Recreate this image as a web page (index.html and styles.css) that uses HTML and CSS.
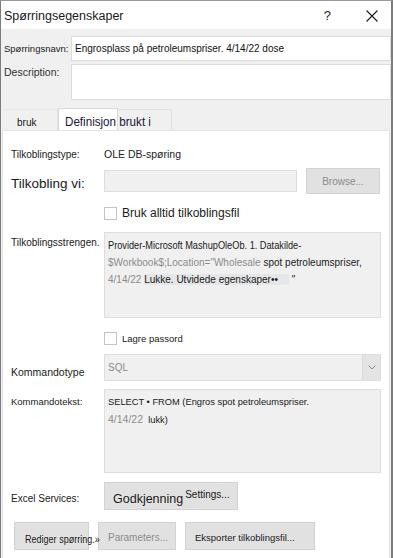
FILE: index.html
```html
<!DOCTYPE html>
<html>
<head>
<meta charset="utf-8">
<link rel="stylesheet" href="styles.css">
</head>
<body>
<div class="window">
  <div class="titlebar">
    <span class="title">Spørringsegenskaper</span>
    <span class="help">?</span>
    <svg class="close" width="12" height="12" viewBox="0 0 12 12"><path d="M0.5 0.5L11.5 11.5M11.5 0.5L0.5 11.5" stroke="#1a1a1a" stroke-width="1.1" fill="none"/></svg>
  </div>
  <div class="body">
    <div class="qrow">
      <span class="qlabel small">Spørringsnavn:</span>
      <div class="qinput">Engrosplass på petroleumspriser. 4/14/22 dose</div>
    </div>
    <div class="qrow desc">
      <span class="qlabel">Description:</span>
      <div class="qarea"></div>
    </div>
    <div class="tabs">
      <div class="tab t1">bruk</div>
      <div class="tab t2"><span class="t2label">Definisjon brukt i</span></div>
      <div class="tab t3"></div>
    </div>
    <div class="panel">
      <div class="row r1">
        <span class="label small">Tilkoblingstype:</span>
        <span class="value">OLE DB-spøring</span>
      </div>
      <div class="row r2">
        <span class="label big">Tilkobling vi:</span>
        <div class="field conn"></div>
        <div class="btn browse">Browse...</div>
      </div>
      <div class="row r3">
        <span class="label"></span>
        <span class="check"></span>
        <span class="checktext big">Bruk alltid tilkoblingsfil</span>
      </div>
      <div class="row r4">
        <span class="label mid">Tilkoblingsstrengen.</span>
        <div class="field area connstr">
          <div class="line"><span class="narrow">Provider-Microsoft MashupOleOb. 1. Datakilde-</span></div>
          <div class="line"><span class="gray">$Workbook$;Location="Wholesale</span> spot petroleumspriser,</div>
          <div class="line"><span class="gray">4/14/22</span> <span class="hl">Lukke. Utvidede egenskaper••&nbsp;&nbsp;&nbsp;&nbsp;</span> "</div>
        </div>
      </div>
      <div class="row r5">
        <span class="label"></span>
        <span class="check"></span>
        <span class="checktext small">Lagre passord</span>
      </div>
      <div class="row r6">
        <span class="label cmd">Kommandotype</span>
        <div class="field select">
          <span class="seltext">SQL</span>
          <span class="arrow"><svg width="8" height="5" viewBox="0 0 8 5"><path d="M0.5 0.5L4 4L7.5 0.5" stroke="#8a8a8a" stroke-width="1" fill="none"/></svg></span>
        </div>
      </div>
      <div class="row r7">
        <span class="label small">Kommandotekst:</span>
        <div class="field area cmdtext">
          <div class="line">SELECT • FROM (Engros spot petroleumspriser.</div>
          <div class="line"><span class="gray big3">4/14/22</span>&nbsp; lukk)</div>
        </div>
      </div>
      <div class="row r8">
        <span class="label mid">Excel Services:</span>
        <div class="btn auth"><span class="big2">Godkjenning</span><span class="sett">Settings...</span></div>
      </div>
      <div class="row r9">
        <div class="btn b1"><span class="b1text">Rediger spørring.»</span></div>
        <div class="btn b2">Parameters...</div>
        <div class="btn b3">Eksporter tilkoblingsfil...</div>
      </div>
    </div>
  </div>
</div>
</body>
</html>
```

FILE: styles.css
```css
* { box-sizing: border-box; }
html, body { margin: 0; padding: 0; }
body {
  font-family: "Liberation Sans", Arial, sans-serif;
  color: #1a1a1a;
  background: #fff;
}
.window {
  width: 393px;
  height: 558px;
  border-left: 1px solid #7d7d7d;
  border-top: 1px solid #9a9a9a;
  border-right: 2px solid #7d7d7d;
  overflow: hidden;
  display: flex;
  flex-direction: column;
}
.titlebar {
  height: 28px;
  background: #fff;
  display: flex;
  align-items: center;
  flex-shrink: 0;
}
.title {
  font-size: 12.5px;
  margin-left: 3px;
  margin-top: 2px;
  flex: 1;
}
.help {
  font-size: 13px;
  margin-right: 35px;
  margin-top: 1px;
}
.close { margin-right: 13px; margin-top: 2px; }
.body {
  flex: 1;
  background: #f0f0f0;
  display: flex;
  flex-direction: column;
  padding-top: 7px;
}
.qrow {
  display: flex;
  align-items: center;
  height: 25px;
}
.qrow.desc {
  margin-top: 3px;
  height: 36px;
  align-items: flex-start;
}
.qlabel {
  width: 70px;
  padding-left: 3px;
  font-size: 10.5px;
  color: #333;
}
.qlabel.small { font-size: 9.5px; padding-left: 3px; color: #1a1a1a; }
.desc .qlabel { margin-top: 2px; }
.qinput {
  flex: 1;
  height: 25px;
  background: #fff;
  border: 1px solid #dcdcdc;
  font-size: 10px;
  padding-left: 3px;
  display: flex;
  align-items: center;
  color: #111;
}
.qarea {
  flex: 1;
  height: 36px;
  background: #fff;
  border: 1px solid #dcdcdc;
}
.tabs {
  margin-top: 8px;
  display: flex;
  height: 22px;
  padding-left: 2px;
  align-items: flex-end;
}
.tab {
  height: 21px;
  font-size: 10px;
  display: flex;
  align-items: center;
}
.t1 {
  width: 55px;
  padding-left: 14px;
  padding-top: 4px;
  border-top: 1px solid #e8e8e8;
  border-right: 1px solid #e2e2e2;
}
.t2 {
  width: 60px;
  height: 22px;
  background: #fff;
  border: 1px solid #d8d8d8;
  border-bottom: none;
  position: relative;
  z-index: 1;
}
.t2label {
  position: absolute;
  left: 6px;
  top: 6px;
  font-size: 12.5px;
  white-space: nowrap;
  color: #1a1240;
  transform: scaleX(0.93);
  transform-origin: left center;
}
.t3 {
  width: 54px;
  border-top: 1px solid #e0e0e0;
  border-right: 1px solid #e0e0e0;
}
.panel {
  flex: 1;
  background: #fff;
  margin-left: 1px;
  margin-right: 1px;
  border-left: 1px solid #e4e4e4;
  border-right: 1px solid #e4e4e4;
  border-top: 1px solid #e4e4e4;
  display: flex;
  flex-direction: column;
  padding-left: 8px;
}
.row { display: flex; align-items: center; }
.label {
  width: 93px;
  flex-shrink: 0;
  font-size: 10px;
}
.label.small { font-size: 9.5px; }
.r1 .label.small { font-size: 10px; }
.label.big { font-size: 13.5px; }
.label.mid { font-size: 10px; }
.label.cmd { font-size: 10.5px; }
.r1 { margin-top: 15px; height: 16px; }
.value { font-size: 10.5px; color: #222; }
.r2 { margin-top: 6px; height: 26px; }
.r2 .label { padding-top: 5px; }
.field {
  background: #f0f0f0;
  border: 1px solid #dedede;
}
.conn { width: 193px; height: 22px; }
.btn {
  background: #e1e1e1;
  border: 1px solid #d3d3d3;
  display: flex;
  align-items: center;
  justify-content: center;
  font-size: 10px;
}
.browse {
  margin-left: 9px;
  width: 74px;
  height: 26px;
  color: #8a8a8a;
}
.r3 { margin-top: 12px; height: 14px; }
.check {
  width: 13px;
  height: 13px;
  border: 1px solid #c4c4c4;
  background: #fff;
  margin-right: 5px;
}
.checktext.big { font-size: 12px; }
.checktext.small { font-size: 9.5px; }
.r4 { margin-top: 12px; height: 86px; align-items: flex-start; }
.r4 .label { padding-top: 5px; }
.area {
  width: 277px;
  padding: 4px 0 0 3px;
  font-size: 10px;
}
.connstr { height: 86px; }
.line { height: 17px; line-height: 17px; white-space: nowrap; }
.narrow {
  display: inline-block;
  transform: scaleX(0.92);
  transform-origin: left center;
}
.gray { color: #8c8c8c; }
.big3 { font-size: 10.5px; }
.hl { background: #e4e6e7; }
.r5 { margin-top: 14px; height: 13px; }
.r6 { margin-top: 9px; height: 27px; }
.r6 .label { padding-top: 8px; }
.select {
  width: 277px;
  height: 27px;
  display: flex;
  align-items: center;
}
.seltext { flex: 1; padding-left: 3px; font-size: 10px; color: #8c8c8c; }
.arrow {
  width: 18px;
  height: 25px;
  background: #e4e4e4;
  border-left: 1px solid #d8d8d8;
  display: flex;
  align-items: center;
  justify-content: center;
}
.r7 { margin-top: 8px; height: 84px; align-items: flex-start; }
.r7 .label { padding-top: 7px; }
.cmdtext { height: 84px; padding-top: 4px; font-size: 9.3px; }
.r8 { margin-top: 9px; height: 28px; }
.r8 .label { padding-top: 4px; }
.auth {
  width: 134px;
  height: 28px;
  justify-content: flex-start;
  padding-left: 8px;
  align-items: center;
}
.big2 { font-size: 12.5px; margin-top: 5px; }
.sett { font-size: 10px; margin-top: -3px; margin-left: 2px; }
.r9 { margin-top: 12px; height: 28px; padding-left: 3px; }
.r9 .btn { height: 28px; }
.b1 {
  width: 75px;
  justify-content: flex-start;
  padding-left: 10px;
  padding-top: 5px;
  white-space: nowrap;
  position: relative;
  z-index: 1;
}
.b1text {
  display: inline-block;
  font-size: 10.5px;
  transform: scaleX(0.86);
  transform-origin: left center;
}
.b2 {
  width: 78px;
  margin-left: 9px;
  color: #8c8c8c;
  padding-top: 3px;
  justify-content: flex-start;
  padding-left: 9px;
}
.b3 {
  width: 130px;
  margin-left: 9px;
  padding-top: 2px;
  font-size: 9.5px;
  justify-content: flex-start;
  padding-left: 9px;
}
```
